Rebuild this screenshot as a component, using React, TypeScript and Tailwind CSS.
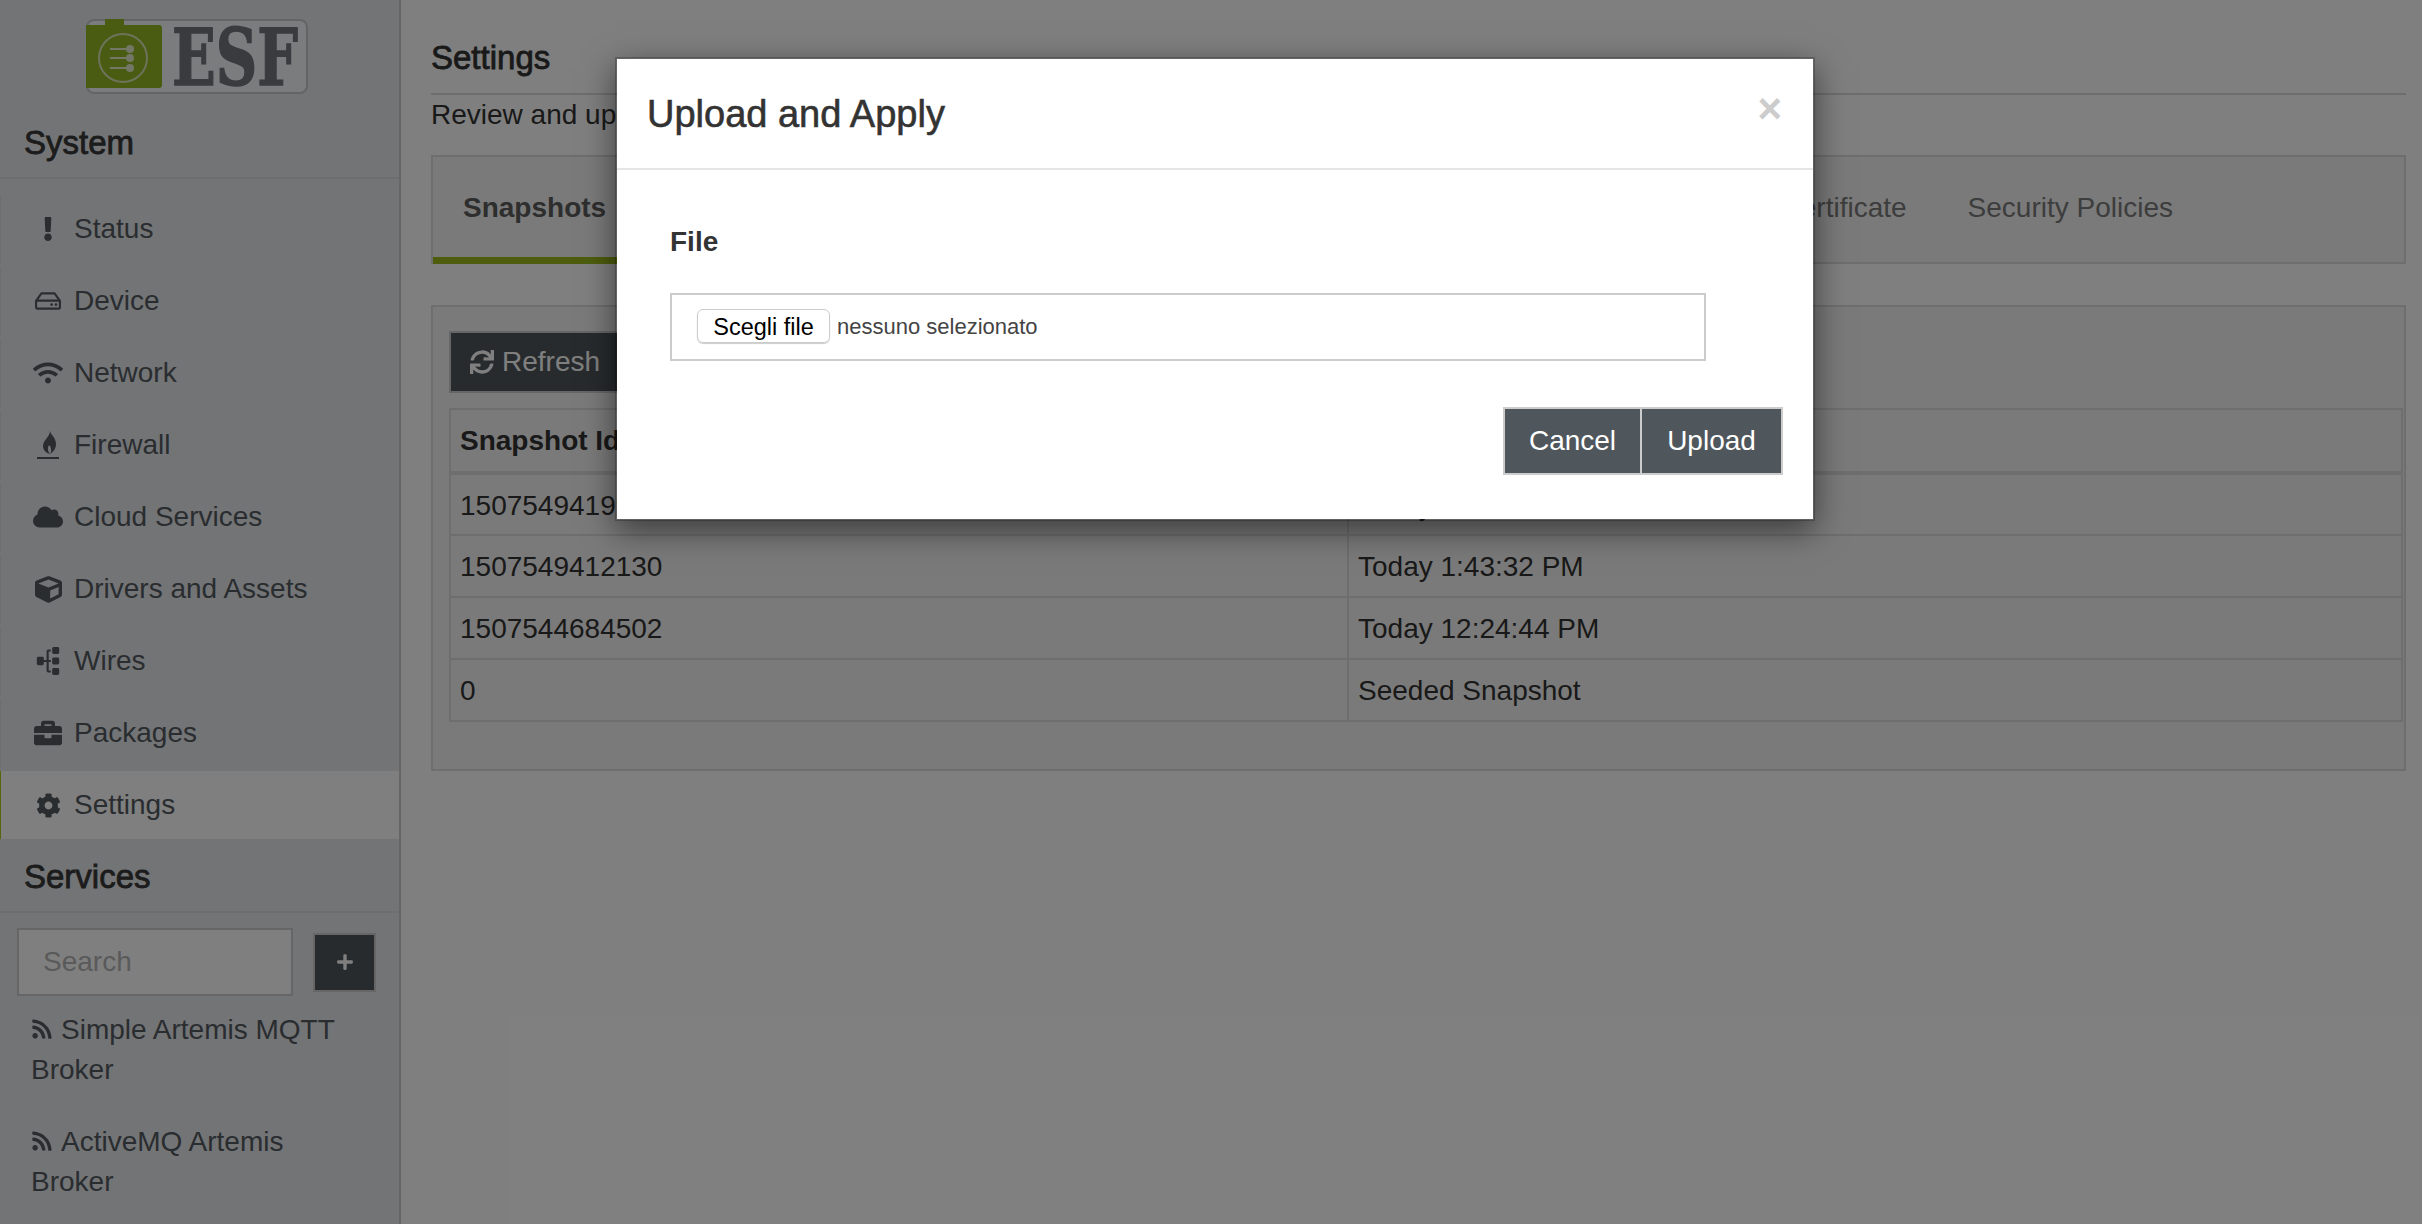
import type { ReactNode } from "react"
import { FaBriefcase, FaCloud, FaCog, FaCube, FaExclamation, FaPlus, FaRegHdd, FaRss, FaSitemap, FaSync, FaWifi } from "react-icons/fa"

const FONT = "font-['Liberation_Sans',Arial,sans-serif]"

function FirewallIcon() {
  return (
    <svg viewBox="0 0 24 28" className="w-[24px] h-[28px]" fill="currentColor">
      <path d="M14 0c1 4 6 7 6 13 0 5-3 8-6 10 2-3 1-6 0-8-1-1-2 0-2 2 0 2 0 4 2 6-4-1-7-4-7-8 0-6 7-9 7-15z" />
      <rect x="1" y="26" width="22" height="2" />
    </svg>
  )
}

const systemItems: { label: string; icon: ReactNode; active?: boolean }[] = [
  { label: "Status", icon: <FaExclamation size={24} /> },
  { label: "Device", icon: <FaRegHdd size={26} /> },
  { label: "Network", icon: <FaWifi size={30} /> },
  { label: "Firewall", icon: <FirewallIcon /> },
  { label: "Cloud Services", icon: <FaCloud size={30} /> },
  { label: "Drivers and Assets", icon: <FaCube size={27} /> },
  { label: "Wires", icon: <FaSitemap size={28} className="-rotate-90" /> },
  { label: "Packages", icon: <FaBriefcase size={28} /> },
  { label: "Settings", icon: <FaCog size={25} />, active: true },
]

const rows = [
  ["1507549419920", "Today 1:43:39 PM"],
  ["1507549412130", "Today 1:43:32 PM"],
  ["1507544684502", "Today 12:24:44 PM"],
  ["0", "Seeded Snapshot"],
]

function Logo() {
  return (
    <svg viewBox="0 -17 260 93" className="w-[260px] h-[93px]">
      <rect x="1" y="1" width="220" height="73" rx="7" fill="#f6f8fb" stroke="#c6c8cc" strokeWidth="2" />
      <path d="M19 0h19v6h35a3 3 0 013 3v57a3 3 0 01-3 3H0V6h19z" fill="#94b824" />
      <circle cx="37" cy="39" r="24" fill="none" stroke="#dbe6b4" strokeWidth="2" />
      <g fill="#e8efcd">
        <rect x="24" y="29" width="20" height="2" />
        <rect x="24" y="38" width="20" height="2" />
        <rect x="24" y="48" width="20" height="2" />
        <circle cx="44" cy="30" r="4" />
        <circle cx="44" cy="39" r="4" />
        <circle cx="44" cy="49" r="4" />
      </g>
      <text x="86" y="66" fontFamily="'DejaVu Serif',serif" fontWeight="700" fontSize="78" fill="#75767f" stroke="#75767f" strokeWidth="1.5" textLength="126" lengthAdjust="spacingAndGlyphs">
        ESF
      </text>
    </svg>
  )
}

function Sidebar() {
  return (
    <div className="w-[401px] shrink-0 h-full bg-[#e6e8ec] border-r-2 border-[#ccc] overflow-hidden">
      <div className="pt-[2px] pl-[86px] h-[114px]">
        <Logo />
      </div>
      <h2 className="h-[65px] border-b-2 border-[#ddd] pl-[24px] pt-[9px] text-[33px] leading-[40px] text-[#383838] [-webkit-text-stroke:0.8px_#383838]">System</h2>
      <ul className="pt-[12px]">
        {systemItems.map((item) => (
          <li
            key={item.label}
            className={`h-[68px] mt-[4px] flex items-center text-[28px] text-[#545a60] border-l ${item.active ? "bg-white border-[#a8c820]" : "border-[#ddd]"}`}
          >
            <span className="w-[52px] ml-[21px] flex justify-center shrink-0">{item.icon}</span>
            <span>{item.label}</span>
          </li>
        ))}
      </ul>
      <h2 className="h-[74px] border-b-2 border-[#ddd] pl-[24px] pt-[18px] text-[33px] leading-[40px] text-[#383838] [-webkit-text-stroke:0.8px_#383838]">Services</h2>
      <div className="flex items-center pl-[17px] pt-[15px]">
        <div className="w-[276px] h-[68px] border-2 border-[#ccc] bg-white flex items-center pl-[24px] text-[28px] text-[#b4b4b4]">Search</div>
        <button className="ml-[20px] w-[63px] h-[59px] bg-[#4e565c] border-2 border-[#ccc] flex items-center justify-center text-white">
          <FaPlus size={18} />
        </button>
      </div>
      <ul className="px-[31px] pt-[14px] text-[28px] leading-[40px] text-[#545a60]">
        {["Simple Artemis MQTT Broker", "ActiveMQ Artemis Broker"].map((s) => (
          <li key={s} className="mb-[32px]">
            <FaRss size={22} className="inline align-[-1px] mr-[8px]" />
            {s}
          </li>
        ))}
      </ul>
    </div>
  )
}

function Main() {
  return (
    <div className="flex-1 min-w-0 pl-[30px] pr-[16px] text-[#333]">
      <h1 className="mt-[38px] h-[57px] border-b-2 border-[#ddd] text-[33px] leading-[40px] [-webkit-text-stroke:0.8px_#333]">Settings</h1>
      <p className="text-[28px] leading-[40px]">Review and update your system settings</p>
      <div className="mt-[20px] h-[109px] border-2 border-[#ddd] bg-[#f5f5f5] flex text-[28px] text-[#7a7a7a]">
        <div className="px-[30px] w-[186px] h-[107px] border-b-[7px] border-[#98bc1c] pt-[31px] font-bold text-[#5c5c5c] leading-[40px] shrink-0">Snapshots</div>
        <div className="ml-auto pt-[31px] leading-[40px] pr-[231px] flex gap-[61px]">
          <span>Device SSL Certificate</span>
          <span>Security Policies</span>
        </div>
      </div>
      <div className="mt-[41px] h-[466px] border-2 border-[#ddd] bg-[#f5f5f5] px-[16px] pt-[24px]">
        <button className="h-[62px] w-[200px] bg-[#4e565c] border-2 border-[#ccc] text-white text-[28px] flex items-center pl-[19px] gap-[8px]">
          <FaSync size={24} />
          Refresh
        </button>
        <table className="mt-[15px] w-[1954px] table-fixed border-collapse text-[28px] text-[#333]">
          <thead>
            <tr className="h-[64px]">
              <th className="w-[898px] border-2 border-b-4 border-[#ddd] text-left font-bold px-[9px]">Snapshot Id</th>
              <th className="border-2 border-b-4 border-[#ddd] text-left font-bold px-[9px]">Created On</th>
            </tr>
          </thead>
          <tbody>
            {rows.map(([id, created]) => (
              <tr key={id} className="h-[62px]">
                <td className="border-2 border-[#ddd] px-[9px] pt-[2px]">{id}</td>
                <td className="border-2 border-[#ddd] px-[9px] pt-[2px]">{created}</td>
              </tr>
            ))}
          </tbody>
        </table>
      </div>
    </div>
  )
}

function UploadModal() {
  return (
    <div className="absolute inset-0 bg-black/50">
      <div className="ml-[615px] mt-[57px] w-[1200px] h-[464px] bg-white border-2 border-black/20 bg-clip-padding shadow-[0_10px_30px_rgba(0,0,0,0.5)] text-[#333]">
        <div className="h-[111px] border-b-2 border-[#e5e5e5] pl-[30px] pr-[31px] flex justify-between">
          <h3 className="text-[38px] leading-[50px] pt-[30px] [-webkit-text-stroke:0.6px_#333]">Upload and Apply</h3>
          <span className="text-[42px] leading-[42px] font-bold text-[#ccc] pt-[29px]">×</span>
        </div>
        <div className="pl-[53px] pt-[52px] pr-[106px]">
          <div className="text-[28px] leading-[40px] font-bold">File</div>
          <div className="mt-[31px] h-[68px] w-[1036px] border-2 border-[#ccc] flex items-center pl-[25px] text-[22px]">
            <button className="h-[34px] -mt-[2px] w-[133px] rounded-[6px] border border-[#ccc] shadow-[0_1px_1px_rgba(0,0,0,0.2)] text-black text-[23.5px]">Scegli file</button>
            <span className="ml-[7px] -mt-[2px] text-[#444]">nessuno selezionato</span>
          </div>
        </div>
        <div className="flex justify-end pr-[30px] mt-[46px]">
          <button className="w-[139px] h-[68px] bg-[#4f565c] border-2 border-[#ccc] text-white text-[28px]">Cancel</button>
          <button className="w-[143px] h-[68px] -ml-[2px] bg-[#4f565c] border-2 border-[#ccc] text-white text-[28px]">Upload</button>
        </div>
      </div>
    </div>
  )
}

export default function App() {
  return (
    <div className={`relative h-[1224px] w-full flex overflow-hidden bg-white ${FONT}`}>
      <Sidebar />
      <Main />
      <UploadModal />
    </div>
  )
}
